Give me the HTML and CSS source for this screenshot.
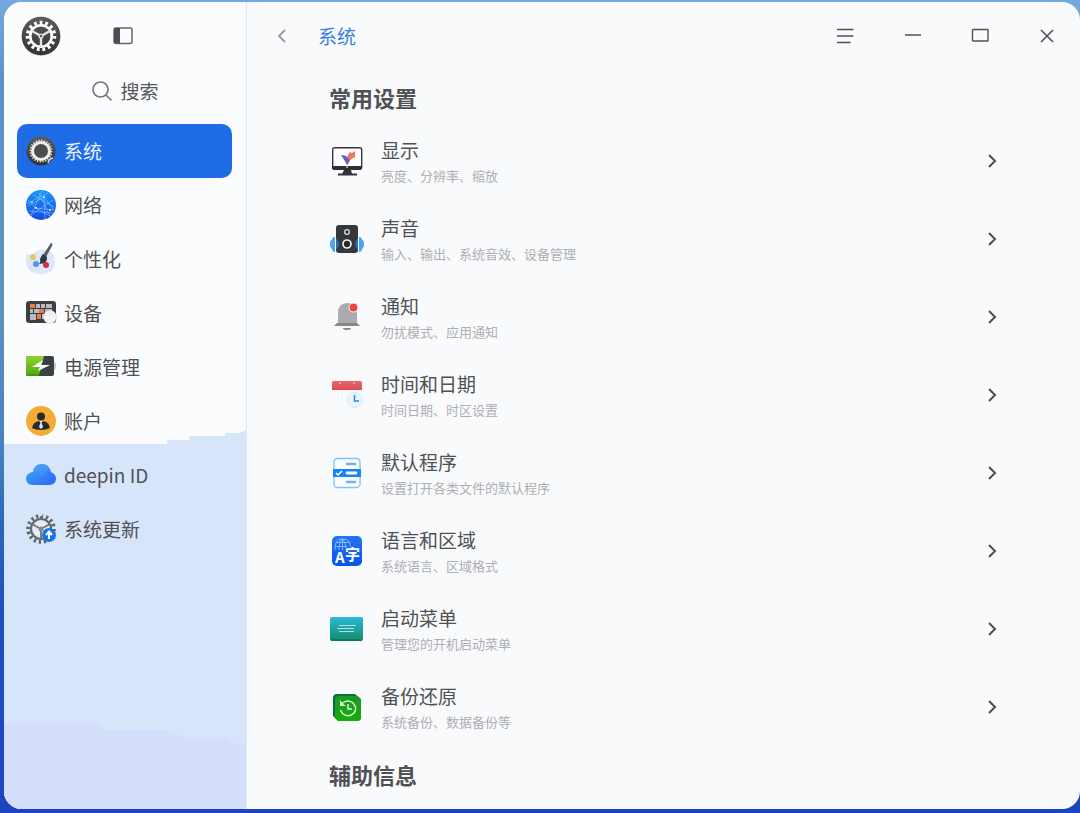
FILE: index.html
```html
<!DOCTYPE html>
<html lang="zh-CN">
<head>
<meta charset="utf-8">
<meta name="viewport" content="width=device-width, initial-scale=1">
<title>系统</title>
<link rel="stylesheet" href="styles.css">
</head>
<body>
<div class="window">
  <aside class="sidebar">
    <svg class="sidebar-tint" viewBox="0 0 243 807" preserveAspectRatio="none" aria-hidden="true">
      <path fill="#d7e5fb" d="M0 442H164V438H186V434H222V431H237L243 428V807H0Z"/>
      <path fill="#d4ddfa" d="M0 722H96L101 728H163L180 735H221L228 741L243 743V807H0Z"/>
    </svg>
    <div class="sidebar-top">
      <svg class="logo" viewBox="0 0 40 40" aria-hidden="true">
        <defs><linearGradient id="dark" x2="0" y2="1"><stop stop-color="#5a5c5e"/><stop offset="1" stop-color="#303234"/></linearGradient></defs>
        <circle cx="20" cy="20.500" r="19.500" fill="#c9cbcd"/>
        <circle cx="20" cy="20" r="19.300" fill="url(#dark)"/>
        <circle cx="20" cy="20" r="13.500" fill="none" stroke="#fff" stroke-width="3.600" pathLength="60" stroke-dasharray="2 2"/>
        <circle cx="20" cy="20" r="10.800" fill="none" stroke="#fff" stroke-width="2.600"/>
        <path d="M20 21V31M20 20L11 15M20 20L29 15" stroke="#e4e6e8" stroke-width="2.400"/>
        <circle cx="20" cy="20" r="2.600" fill="#dfe1e3"/>
        <circle cx="20" cy="20" r="1.200" fill="#55585a"/>
      </svg>
      <button class="icon-button" type="button" aria-label="切换侧边栏">
        <svg width="20" height="18" viewBox="0 0 20 18"><rect x="1" y="1" width="18" height="15.500" rx="2" fill="none" stroke="#66686b" stroke-width="1.500"/><path d="M1 3Q1 1 3 1H7V16.500H3Q1 16.500 1 14.500Z" fill="#4b4d50"/></svg>
      </button>
    </div>
    <label class="search">
      <svg width="20" height="20" viewBox="0 0 20 20" fill="none" stroke="#77797c" stroke-width="1.700" stroke-linecap="round" aria-hidden="true"><circle cx="8.500" cy="8.500" r="7.500"/><path d="M14 14L19 19"/></svg>
      <input type="text" placeholder="搜索" aria-label="搜索">
    </label>
    <nav class="nav">
      <a class="nav-item active" href="#system" aria-current="page">
        <svg viewBox="0 0 30 30" aria-hidden="true"><circle cx="15" cy="15" r="14.500" fill="url(#dark)"/><circle cx="15" cy="15" r="10.500" fill="none" stroke="#d9d7d5" stroke-width="2" pathLength="72" stroke-dasharray="1.500 1.500"/><circle cx="15" cy="15" r="8.500" fill="#4a4c4f" stroke="#f0eeec" stroke-width="3"/><path d="M22 27Q23 23 27 22" fill="none" stroke="#ddd" stroke-width="1.500"/></svg>
        <span>系统</span></a>
      <a class="nav-item" href="#network">
        <svg viewBox="0 0 30 30" aria-hidden="true"><defs><linearGradient id="globe" x2="0" y2="1"><stop stop-color="#1998f6"/><stop offset="1" stop-color="#1548e8"/></linearGradient></defs><circle cx="15" cy="15" r="15" fill="url(#globe)"/><path d="M16 1L5 25M13 3L24 26M2 16L18 7L28 20L10 18L2 10M5 25L27 10M7 5L28 17M10 18L24 26M18 7L19 29M3 21L27 23M1 14Q12 7 22 3" fill="none" stroke="#91c9ff" stroke-width=".7" opacity=".8"/><g fill="#e1f3ff"><circle cx="18" cy="7" r="1"/><circle cx="10" cy="18" r="1"/><circle cx="24" cy="20" r="1"/><circle cx="6" cy="12" r=".8"/></g></svg>
        <span>网络</span></a>
      <a class="nav-item" href="#personalization">
        <svg viewBox="0 0 30 30" aria-hidden="true"><path d="M1 10Q4 12 8 9Q14 4 21 6Q29 8 29 17Q29 30 15 30Q0 30 0 16Q0 12 1 10Z" fill="#dce7fa"/><circle cx="7" cy="13" r="3" fill="#f4c45b"/><circle cx="10" cy="20" r="3" fill="#4d98f1"/><circle cx="20" cy="21" r="3" fill="#dc2850"/><path d="M25-1Q27-1 26 2L20 13L17 11Z" fill="#585b62"/><path d="M17 10L21 13Q22 20 13 20Q15 18 14 15Q15 12 17 10Z" fill="#34373d"/></svg>
        <span>个性化</span></a>
      <a class="nav-item" href="#devices">
        <svg viewBox="0 0 30 30" aria-hidden="true"><rect y="3" width="30" height="22" rx="3" fill="#3d3e42"/><g fill="#b9bbc0"><path d="M10 6h4v4h-4zM15 6h4v4h-4zM20 6h6v4h-6zM4 11h3v4H4zM8 11h5v4H8zM19 11h7v4h-7zM4 16h6v6H4zM16 16h5v5h-5z"/></g><path d="M4 6h5v4H4zM13 11h5v4h-5zM11 16h4v5h-4z" fill="#e47d51"/><circle cx="24" cy="19" r="6.500" fill="#f4f4f5" stroke="#d8dade" stroke-width=".7"/><path d="M24 13V17" stroke="#dadce0"/></svg>
        <span>设备</span></a>
      <a class="nav-item" href="#power">
        <svg viewBox="0 0 30 30" aria-hidden="true"><defs><linearGradient id="battery" x2="0" y2="1"><stop stop-color="#8fd62a"/><stop offset="1" stop-color="#4da612"/></linearGradient></defs><path d="M28 10Q30 10 30 14T28 18Z" fill="#c7cacd"/><rect y="4" width="28" height="20" rx="2" fill="#3c4044"/><path d="M2 4H18L13 24H2Q0 24 0 22V6Q0 4 2 4Z" fill="url(#battery)"/><path d="M17 8L15 13H24L12 19L14 15H6Z" fill="#fff"/><path d="M1 23H27" stroke="#2d6613" opacity=".5"/></svg>
        <span>电源管理</span></a>
      <a class="nav-item" href="#accounts">
        <svg viewBox="0 0 30 30" aria-hidden="true"><circle cx="15" cy="15" r="15" fill="#f4ad34"/><circle cx="15" cy="10.500" r="4" fill="#292b2f"/><path d="M6 22Q7 16 13 15H17Q23 16 24 22Q20 24 15 24T6 22Z" fill="#292b2f"/><path d="M13 15H17L15 17Z" fill="#fff"/><path d="M14.500 16.500h1L17 21l-2 2-2-2Z" fill="#e1e5ea"/></svg>
        <span>账户</span></a>
      <a class="nav-item" href="#deepin-id">
        <svg viewBox="0 0 30 30" aria-hidden="true"><defs><linearGradient id="cloud" x2="1" y2="1"><stop stop-color="#43a9fa"/><stop offset="1" stop-color="#2864f4"/></linearGradient></defs><path d="M7 25Q0 25 0 18.500Q0 13 7 12Q8 4 16 4Q23 4 25 12Q30 14 30 18.500Q30 25 23 25Z" fill="url(#cloud)"/><path d="M7 12Q13 11 15 17Q20 9 25 12Q23 4 16 4Q8 4 7 12Z" fill="#50a7fb" opacity=".35"/></svg>
        <span>deepin ID</span></a>
      <a class="nav-item" href="#updates">
        <svg viewBox="0 0 30 30" aria-hidden="true"><circle cx="15" cy="15" r="12.800" fill="none" stroke="#5f6266" stroke-width="4" pathLength="64" stroke-dasharray="1.800 2.200"/><circle cx="15" cy="15" r="10" fill="#e4ebf6" stroke="#65686c" stroke-width="2.200"/><path d="M15 16V25M15 15L6 10M15 15L24 10" stroke="#707378" stroke-width="1.800"/><circle cx="15" cy="15" r="2.500" fill="#85888c"/><circle cx="23" cy="21" r="7" fill="#1876df"/><path d="M23 25V18M20 21L23 17.500L26 21" fill="none" stroke="#fff" stroke-width="2"/></svg>
        <span>系统更新</span></a>
    </nav>
  </aside>
  <main class="main">
    <header class="titlebar">
      <button class="icon-button back" type="button" aria-label="返回"><svg width="9" height="14" viewBox="0 0 9 14" fill="none" stroke="#96989b" stroke-width="1.800"><path d="M8 1L2 7L8 13"/></svg></button>
      <h1 class="page-title">系统</h1>
      <div class="controls">
        <button class="icon-button" type="button" aria-label="菜单"><svg width="18" height="16" viewBox="0 0 18 16" stroke="#505255" stroke-width="1.300"><path d="M0 1.500H16.500M0 8H16.500M0 14.500H13.500"/></svg></button>
        <button class="icon-button" type="button" aria-label="最小化"><svg width="18" height="16" viewBox="0 0 18 16" stroke="#505255" stroke-width="1.400"><path d="M1 7H17"/></svg></button>
        <button class="icon-button" type="button" aria-label="最大化"><svg width="18" height="16" viewBox="0 0 18 16" fill="none" stroke="#505255" stroke-width="1.400"><rect x="1.500" y="1.500" width="15.500" height="11.500" rx=".5"/></svg></button>
        <button class="icon-button" type="button" aria-label="关闭"><svg width="14" height="14" viewBox="0 0 14 14" stroke="#505255" stroke-width="1.600"><path d="M1 1L13 13M13 1L1 13"/></svg></button>
      </div>
    </header>
    <div class="content">
      <section>
        <h2 class="section-title">常用设置</h2>
        <ul class="settings">
          <li><a class="row" href="#display">
            <svg class="row-icon" viewBox="0 0 34 34" aria-hidden="true"><rect x="2.700" y="3.700" width="29" height="21" rx="2" fill="#fff" stroke="#36343d" stroke-width="1.400"/><path d="M2 22H32V24Q32 26 30 26H4Q2 26 2 24Z" fill="#302e38"/><path d="M14 26H21L22 30H12Z" fill="#35323d"/><path d="M8 30.500H27" stroke="#35323d" stroke-width="2"/><path d="M17 21Q15 17 11 11Q16 11 18 14Q17 12 19 10Q21 13 20 16Q19 19 17 21Z" fill="#655acb"/><path d="M17 13L20 8L22 9L25 7L25 13L20 16Z" fill="#f2795e"/><circle cx="17" cy="23" r="1" fill="#e9b19d"/></svg>
            <span class="row-text"><span class="row-title">显示</span><span class="row-note">亮度、分辨率、缩放</span></span>
            <svg class="chevron" viewBox="0 0 10 14"><path d="M2 1L8 7L2 13"/></svg></a></li>
          <li><a class="row" href="#sound">
            <svg class="row-icon" viewBox="0 0 34 34" aria-hidden="true"><path d="M5 15V30Q2 30 2 27Q0 26 0 22T2 18Q2 15 5 15ZM29 15V30Q32 30 32 27Q34 26 34 22T32 18Q32 15 29 15Z" fill="#4ba2f3"/><rect x="6" y="3" width="22" height="28" rx="3" fill="#35373a"/><path d="M6 16Q12 22 6 28ZM28 16Q22 22 28 28Z" fill="#2c6ca9"/><circle cx="17" cy="10" r="2.300" fill="#25272a" stroke="#e2e4e6" stroke-width="1.300"/><circle cx="17" cy="22" r="4" fill="#252a2d" stroke="#f0f2f4" stroke-width="1.700"/></svg>
            <span class="row-text"><span class="row-title">声音</span><span class="row-note">输入、输出、系统音效、设备管理</span></span>
            <svg class="chevron" viewBox="0 0 10 14"><path d="M2 1L8 7L2 13"/></svg></a></li>
          <li><a class="row" href="#notifications">
            <svg class="row-icon" viewBox="0 0 34 34" aria-hidden="true"><path d="M13 28H21Q21 30 17 30T13 28Z" fill="#898b8d"/><path d="M8 24V13Q8 3 17.500 3Q27 3 27 13V24L30 26H4Z" fill="#a9abac"/><path d="M7 23H27L30 26H4Z" fill="#858789"/><circle cx="23.500" cy="7.500" r="4.500" fill="#e74742" stroke="#fafcfd" stroke-width="1"/></svg>
            <span class="row-text"><span class="row-title">通知</span><span class="row-note">勿扰模式、应用通知</span></span>
            <svg class="chevron" viewBox="0 0 10 14"><path d="M2 1L8 7L2 13"/></svg></a></li>
          <li><a class="row" href="#datetime">
            <svg class="row-icon" viewBox="0 0 34 34" aria-hidden="true"><defs><linearGradient id="calendar" x2="0" y2="1"><stop stop-color="#e96565"/><stop offset="1" stop-color="#dc4f59"/></linearGradient></defs><path d="M4 3H30Q32 3 32 5V12H2V5Q2 3 4 3Z" fill="url(#calendar)"/><path d="M10 4v2M24 4v2" stroke="#ffd5d4"/><path d="M8 16v8M12 15v8" stroke="#dfe4ec" stroke-dasharray="1 2"/><circle cx="25" cy="22" r="7.500" fill="#e6f5ff" stroke="#d4ecfb"/><path d="M24.500 17V23H29" fill="none" stroke="#3783cc" stroke-width="1.500"/></svg>
            <span class="row-text"><span class="row-title">时间和日期</span><span class="row-note">时间日期、时区设置</span></span>
            <svg class="chevron" viewBox="0 0 10 14"><path d="M2 1L8 7L2 13"/></svg></a></li>
          <li><a class="row" href="#defaults">
            <svg class="row-icon" viewBox="0 0 34 34" aria-hidden="true"><rect x="4" y="2.500" width="26" height="29" rx="3.500" fill="#fafdff" stroke="#81c0fa" stroke-width="1.300"/><rect x="3" y="13" width="28" height="8" fill="#1684f8"/><path d="M16 8H26M16 26H26" stroke="#80aee0" stroke-width="2.400"/><path d="M17 17H26" stroke="#fff" stroke-width="2.800" stroke-linecap="round"/><path d="M6 17L8 19L12 15" fill="none" stroke="#fff" stroke-width="1.500"/></svg>
            <span class="row-text"><span class="row-title">默认程序</span><span class="row-note">设置打开各类文件的默认程序</span></span>
            <svg class="chevron" viewBox="0 0 10 14"><path d="M2 1L8 7L2 13"/></svg></a></li>
          <li><a class="row" href="#language">
            <svg class="row-icon" viewBox="0 0 34 34" aria-hidden="true"><defs><linearGradient id="lang" x2="0" y2="1"><stop stop-color="#2574f2"/><stop offset="1" stop-color="#0754ee"/></linearGradient></defs><rect x="2" y="2" width="30" height="30" rx="5" fill="url(#lang)"/><g fill="none" stroke="#8dbcff" stroke-width=".9"><path d="M5 16Q4 5 12.500 5T20 13M9 16Q9 7 12.500 5Q16 8 16 14M12.500 5V16M5 12.500H17M6 8.500H19"/></g><text class="icon-letter" x="5" y="29" font-size="15">A</text><text class="icon-letter" x="15" y="26" font-size="15">字</text></svg>
            <span class="row-text"><span class="row-title">语言和区域</span><span class="row-note">系统语言、区域格式</span></span>
            <svg class="chevron" viewBox="0 0 10 14"><path d="M2 1L8 7L2 13"/></svg></a></li>
          <li><a class="row" href="#boot">
            <svg class="row-icon" viewBox="0 0 34 34" aria-hidden="true"><defs><linearGradient id="boot" x2="0" y2="1"><stop stop-color="#2eb9d8"/><stop offset="1" stop-color="#148b6b"/></linearGradient></defs><rect y="5" width="33" height="24" rx="2" fill="url(#boot)"/><path d="M1 28H32" stroke="#08745b" stroke-width="1.400"/><path d="M9 13.500H26M7 16.500H24M9 19.500H24" stroke="#a7e5df" stroke-width="1"/></svg>
            <span class="row-text"><span class="row-title">启动菜单</span><span class="row-note">管理您的开机启动菜单</span></span>
            <svg class="chevron" viewBox="0 0 10 14"><path d="M2 1L8 7L2 13"/></svg></a></li>
          <li><a class="row" href="#backup">
            <svg class="row-icon" viewBox="0 0 34 34" aria-hidden="true"><defs><linearGradient id="backup" x2="0" y2="1"><stop stop-color="#1b9d20"/><stop offset="1" stop-color="#16ac0b"/></linearGradient></defs><path d="M7 4H25L31 9V27Q31 31 27 31H8L3 26V8Q3 4 7 4Z" fill="#086f4a"/><path d="M9 6H26L31 10V27Q31 31 27 31H9L5 27V10Q5 6 9 6Z" fill="url(#backup)"/><path d="M12 13.500Q17 9 22.500 12.500Q28 18 24 23Q19 28 13 24Q11 22 10.500 20" fill="none" stroke="#e1f8dd" stroke-width="1.400"/><path d="M10 10V16H16L13 14Z" fill="#e1f8dd"/><path d="M18 14V19H22" fill="none" stroke="#e1f8dd" stroke-width="1.400"/></svg>
            <span class="row-text"><span class="row-title">备份还原</span><span class="row-note">系统备份、数据备份等</span></span>
            <svg class="chevron" viewBox="0 0 10 14"><path d="M2 1L8 7L2 13"/></svg></a></li>
        </ul>
      </section>
      <section>
        <h2 class="section-title">辅助信息</h2>
      </section>
    </div>
  </main>
</div>
</body>
</html>
```

FILE: styles.css
```css
* {
  box-sizing: border-box;
}

body {
  margin: 0;
  min-height: 100vh;
  padding: 2px 0 4px 4px;
  display: flex;
  background: linear-gradient(#74a9e0 0, #5b93c8 10%, #5e92c2 38%, #4582c0 55%, #2b68b8 64%, #1e50bd 75%, #1c44c2 100%);
  color: #505155;
  font-family: "Noto Sans CJK SC", sans-serif;
  font-size: 19px;
  line-height: 28px;
}

a {
  color: inherit;
  text-decoration: none;
}

h1,
h2,
ul {
  margin: 0;
  padding: 0;
}

ul {
  list-style: none;
}

svg {
  display: block;
  flex: none;
  overflow: visible;
}

.window {
  flex: 1;
  display: flex;
  border-radius: 18px;
  overflow: hidden;
  background: #f9fafc;
}

.sidebar {
  position: relative;
  flex: none;
  width: 243px;
  border-right: 1px solid #e4eaf3;
  background: #fafcfe;
}

.sidebar-tint {
  position: absolute;
  inset: 0;
  width: 100%;
  height: 100%;
}

.sidebar-top,
.search,
.nav {
  position: relative;
}

.sidebar-top {
  display: flex;
  align-items: center;
  gap: 52px;
  height: 67px;
  padding-left: 17px;
}

.logo {
  width: 40px;
  height: 40px;
}

.icon-button {
  display: flex;
  align-items: center;
  justify-content: center;
  padding: 0;
  border: 0;
  background: none;
}

.search {
  display: flex;
  align-items: center;
  justify-content: center;
  gap: 9px;
  height: 43px;
}

.search input {
  width: 38px;
  padding: 0;
  border: 0;
  outline: 0;
  background: none;
  color: inherit;
  font: inherit;
}

.search input::placeholder {
  color: #55575a;
  opacity: 1;
}

.nav {
  display: flex;
  flex-direction: column;
  padding: 12px 14px 0 13px;
}

.nav-item {
  display: flex;
  align-items: center;
  gap: 8px;
  height: 54px;
  padding-left: 9px;
  border-radius: 10px;
}

.nav-item svg {
  width: 30px;
  height: 30px;
}

.nav-item.active {
  background: #1e6de6;
  color: #e8f2ff;
}

.main {
  flex: 1;
  min-width: 0;
}

.titlebar {
  display: flex;
  align-items: center;
  gap: 3px;
  height: 67px;
}

.back {
  width: 68px;
  height: 40px;
}

.page-title {
  color: #3c7fe0;
  font-size: 19px;
  font-weight: 400;
}

.controls {
  display: flex;
  margin-left: auto;
}

.controls .icon-button {
  width: 67px;
  height: 40px;
}

.content {
  padding: 7px 83px 10px 82px;
}

.section-title {
  padding-bottom: 4px;
  font-size: 22px;
  font-weight: 700;
  line-height: 42px;
}

section + section {
  margin-top: 7px;
}

.row {
  display: flex;
  align-items: center;
  height: 78px;
}

.row-icon {
  width: 34px;
  height: 34px;
  margin-left: 1px;
}

.row-text {
  flex: 1;
  display: flex;
  flex-direction: column;
  padding: 2px 0 0 17px;
}

.row-note {
  color: #adafb2;
  font-size: 13px;
  line-height: 24px;
}

.chevron {
  width: 10px;
  height: 14px;
  fill: none;
  stroke: #4c4e51;
  stroke-width: 2;
}

.icon-letter {
  fill: #fff;
  font-family: "Noto Sans CJK SC", sans-serif;
  font-weight: 700;
}
```
